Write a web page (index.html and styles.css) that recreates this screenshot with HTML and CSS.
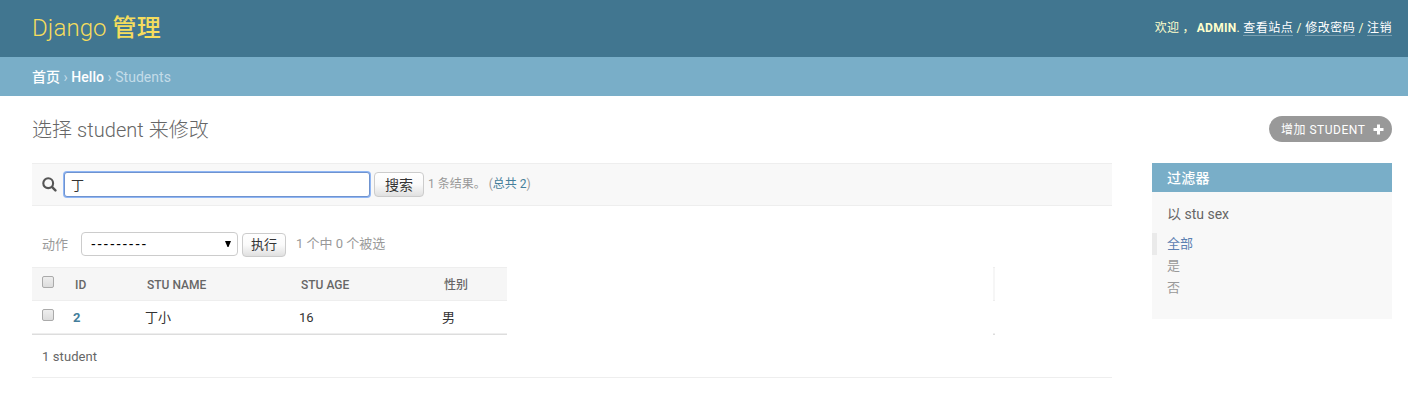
FILE: index.html
```html
<!DOCTYPE html>
<html lang="zh-CN">
<head>
<meta charset="utf-8">
<title>选择 student 来修改</title>
<link rel="stylesheet" href="styles.css">
</head>
<body>
<header class="header">
  <h1 class="brand">Django <b>管理</b></h1>
  <div class="user-tools"><span class="welcome">欢迎<span class="comma">，</span></span><strong>ADMIN</strong>. <a>查看站点</a> / <a>修改密码</a> / <a>注销</a></div>
</header>
<nav class="breadcrumbs"><a>首页</a> › <a>Hello</a> › Students</nav>
<main class="content">
  <div class="title-row">
    <h2 class="title">选择 student 来修改</h2>
    <a class="add"><span>增加 STUDENT</span><svg width="11" height="11" viewBox="0 0 11 11"><path d="M4 .5h3V4h3.500v3H7v3.500H4V7H.5V4H4z" fill="#fff"/></svg></a>
  </div>
  <div class="columns">
    <section class="list">
      <form class="toolbar">
        <svg class="search-icon" width="15" height="15" viewBox="0 0 15 15"><circle cx="6.200" cy="6.200" r="4.900" fill="none" stroke="#555" stroke-width="2.100"/><path d="M9.900 9.900l3.500 3.500" stroke="#555" stroke-width="2.400" stroke-linecap="round"/></svg>
        <div class="search-input">丁</div>
        <div class="button search-button">搜索</div>
        <span class="result">1 条结果。 (<a>总共 2</a>)</span>
      </form>
      <div class="actions">
        <span class="action-label">动作</span>
        <div class="select"><span>---------</span><svg width="6" height="6" viewBox="0 0 6 6"><path d="M0 0h6L3.500 6h-1z" fill="#000"/></svg></div>
        <div class="button go-button">执行</div>
        <span class="counter">1 个中 0 个被选</span>
      </div>
      <div class="table">
        <div class="row head"><span class="cell"><i class="check"></i></span><span class="cell">ID</span><span class="cell">STU NAME</span><span class="cell">STU AGE</span><span class="cell">性别</span></div>
        <div class="edge head"></div>
        <div class="row data"><span class="cell"><i class="check"></i></span><a class="cell">2</a><span class="cell">丁小</span><span class="cell">16</span><span class="cell">男</span></div>
        <div class="edge data"></div>
      </div>
      <p class="paginator">1 student</p>
    </section>
    <aside class="filter">
      <h2 class="filter-title">过滤器</h2>
      <h3 class="filter-name">以 stu sex</h3>
      <ul class="filter-list"><li class="selected">全部</li><li>是</li><li>否</li></ul>
    </aside>
  </div>
</main>
</body>
</html>
```
FILE: styles.css
```css
* { box-sizing: border-box; }
body {
  margin: 0;
  background: #fff;
  color: #333;
  font: 13px/16px Roboto, "Noto Sans CJK SC", sans-serif;
  white-space: nowrap;
}
h1, h2, h3, p, ul { margin: 0; padding: 0; font-weight: 400; }
.header {
  display: flex;
  justify-content: space-between;
  align-items: center;
  height: 57px;
  padding: 0 16px 0 32px;
  background: #417690;
  color: #ffc;
}
.brand { color: #f5dd5d; font-size: 24px; line-height: 28px; font-weight: 300; letter-spacing: .1px; padding-bottom: 1px; }
.brand b { font-weight: 500; }
.user-tools { font-size: 12px; line-height: 14px; letter-spacing: .3px; }
.user-tools strong { font-weight: 700; letter-spacing: .3px; }
.user-tools a { display: inline-block; color: #fff; border-bottom: 1px solid #7a9fb1; letter-spacing: .5px; }
.welcome { margin-right: 2px; }
.comma { margin-left: 3px; }
.breadcrumbs {
  height: 39px;
  padding: 1px 32px 0;
  background: #79aec8;
  color: #c4dce8;
  font-size: 14px;
  line-height: 39px;
  letter-spacing: .03px;
}
.breadcrumbs a { color: #fff; font-weight: 500; }
.content { padding: 20px 16px 0 32px; }
.title-row { display: flex; justify-content: space-between; height: 47px; }
.title { padding-top: 1px; color: #666; font-size: 20px; line-height: 27px; font-weight: 300; letter-spacing: .05px; }
.add {
  display: flex;
  align-items: center;
  justify-content: space-between;
  width: 123px;
  height: 26px;
  padding: 0 8px 0 12px;
  border-radius: 13px;
  background: #999;
  color: #fff;
  font-size: 12px;
  letter-spacing: .5px;
}
.add span { padding-top: 1px; }
.columns { display: flex; gap: 40px; align-items: flex-start; }
.list { width: 1080px; }
.toolbar {
  display: flex;
  align-items: center;
  height: 43px;
  padding-left: 10px;
  background: #f8f8f8;
  border-top: 1px solid #eee;
  border-bottom: 1px solid #eee;
}
.search-icon { margin-right: 7px; }
.search-input {
  width: 306px;
  height: 25px;
  margin: 0 4px 1px 0;
  padding: 0 6px;
  border: 1px solid #6f93cf;
  border-radius: 3px;
  box-shadow: 0 0 0 1px #8fb6f5;
  background: #fff;
  font-size: 13px;
  line-height: 25px;
}
.button {
  border: 1px solid #ccc;
  border-radius: 4px;
  background: linear-gradient(#fff, #fafafa 50%, #e0e0e0);
  color: #333;
  text-align: center;
}
.search-button { width: 50px; height: 25px; font-size: 14px; line-height: 24px; }
.result { margin-left: 4px; color: #999; font-size: 12px; padding-bottom: 2px; }
.result a { color: #447e9b; }
.actions { display: flex; align-items: center; height: 61px; padding: 16px 0 0 10px; color: #999; }
.action-label { width: 39px; }
.select {
  display: flex;
  align-items: center;
  justify-content: space-between;
  width: 157px;
  height: 24px;
  margin-bottom: 1px;
  padding: 0 6px 0 9px;
  border: 1px solid #ccc;
  border-radius: 4px;
  color: #000;
  font: 14px/16px "Liberation Sans", sans-serif;
  letter-spacing: 1.65px;
}
.go-button { width: 44px; height: 24px; margin: 1px 10px 0 4px; font-size: 13px; line-height: 22px; }
.counter { padding-bottom: 2px; }
.table {
  display: grid;
  grid-template-columns: 475px 2px;
  column-gap: 486px;
}
.head { height: 34px; background: #f6f6f6; border-top: 1px solid #eee; border-bottom: 1px solid #eee; }
.data { height: 34px; border-bottom: 1px solid #ddd; box-shadow: inset 0 -1px #eee; }
.row { display: grid; grid-template-columns: 33px 72px 154px 143px 73px; }
.cell { padding-left: 8px; line-height: 33px; }
.cell:first-child { padding: 8px 0 0 10px; line-height: 0; }
.head .cell { color: #666; font-size: 12px; font-weight: 500; line-height: 35px; }
.head .cell:not(:first-child) { padding-left: 10px; }
.data a { color: #447e9b; font-weight: 700; }
.check {
  display: block;
  width: 12px;
  height: 12px;
  border: 1px solid #aaa;
  border-radius: 2px;
  background: linear-gradient(#eee, #dcdcdc);
}
.paginator { height: 43px; padding-left: 10px; border-bottom: 1px solid #eee; color: #666; line-height: 43px; letter-spacing: .1px; }
.filter { width: 240px; height: 156px; background: #f8f8f8; }
.filter-title { height: 29px; padding: 1px 0 0 15px; background: #79aec8; color: #fff; font-size: 14px; line-height: 29px; font-weight: 500; letter-spacing: .3px; }
.filter-name { padding: 14px 15px 11px; color: #666; font-size: 14px; line-height: 16px; }
.filter-list { list-style: none; color: #999; line-height: 22px; }
.filter-list li { height: 22px; padding-left: 15px; }
.filter-list .selected { padding-left: 10px; border-left: 5px solid #eaeaea; color: #5b80b2; }
```
